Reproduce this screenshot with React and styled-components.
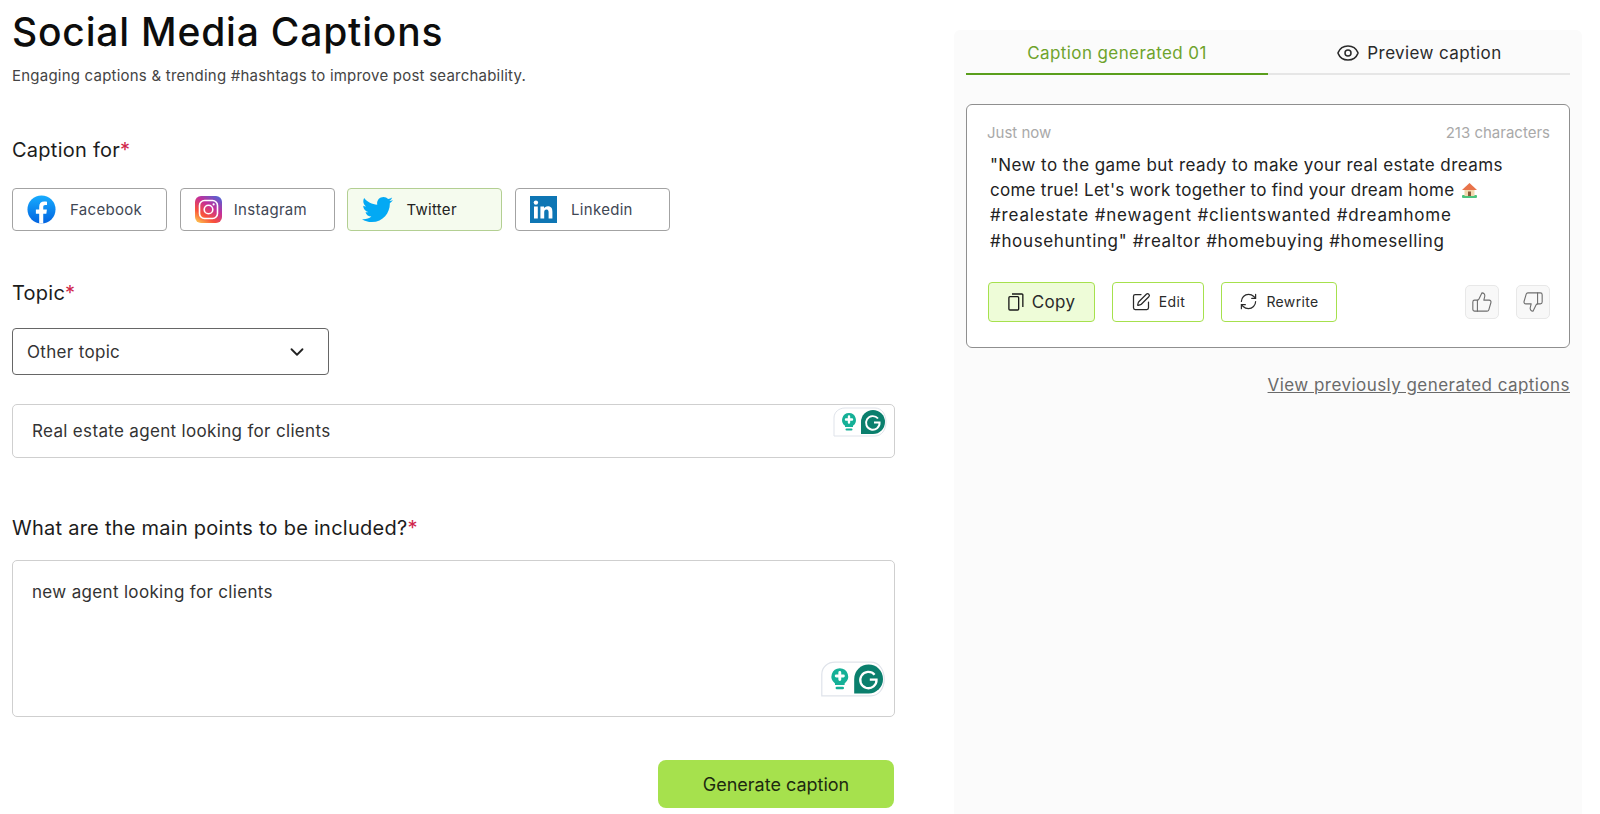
import React from 'react';
import styled, { createGlobalStyle } from 'styled-components';
import { FaTwitter } from 'react-icons/fa';
import { Eye, ChevronDown, SquarePen, RefreshCw, ThumbsUp, ThumbsDown } from 'lucide-react';

const GlobalStyle = createGlobalStyle`
  html, body { margin: 0; padding: 0; background: #fff; }
  body { font-family: Inter, "Open Sans", sans-serif; color: #1a1a1a; overflow: hidden; }
`;

const FacebookIcon = () => (
  <svg width="29" height="29" viewBox="0 0 30 30">
    <defs>
      <linearGradient id="fbg" x1="0" y1="0" x2="0" y2="1">
        <stop offset="0" stopColor="#18acfe" />
        <stop offset="1" stopColor="#0163e0" />
      </linearGradient>
    </defs>
    <circle cx="15" cy="15" r="14.5" fill="url(#fbg)" />
    <path d="M12.6 29.4V19.4H9.2v-4.3h3.4v-3c0-3.5 2-5.4 5.2-5.4 1.5 0 2.9.2 2.9.2v3.5h-1.7c-1.700 0-2.200 1-2.200 2.100v2.600h3.800l-.6 4.300h-3.200v10z" fill="#fff" />
  </svg>
);

const InstagramIcon = () => (
  <svg width="27" height="27" viewBox="0 0 27 27">
    <defs>
      <linearGradient id="igg" x1="0.1" y1="1" x2="0.8" y2="0">
        <stop offset="0" stopColor="#fdc74f" />
        <stop offset="0.3" stopColor="#f9523a" />
        <stop offset="0.65" stopColor="#c32f9a" />
        <stop offset="1" stopColor="#5a5fd0" />
      </linearGradient>
    </defs>
    <rect width="27" height="27" rx="6" fill="url(#igg)" />
    <rect x="4.5" y="4.5" width="18" height="18" rx="5" fill="none" stroke="#fff" strokeWidth="1.6" />
    <circle cx="13.5" cy="13.5" r="4.3" fill="none" stroke="#fff" strokeWidth="1.6" />
    <circle cx="18.6" cy="8.4" r="1.1" fill="#fff" />
  </svg>
);

const LinkedinIcon = () => (
  <svg width="27" height="27" viewBox="0 0 27 27">
    <rect width="27" height="27" fill="#0e76b4" />
    <rect x="4" y="10.5" width="3.8" height="12" fill="#fff" />
    <circle cx="5.9" cy="6.6" r="2.2" fill="#fff" />
    <path d="M10.4 10.5h3.6v1.7c.6-1 1.9-2 3.8-2 3.6 0 4.6 2.2 4.6 5.6v6.7h-3.8v-6c0-1.6-.4-3-2-3-1.8 0-2.4 1.3-2.4 3v6h-3.8z" fill="#fff" />
  </svg>
);

const CopyIcon = () => (
  <svg width="16" height="18" viewBox="0 0 18 20" fill="none" stroke="#1a1a1a" strokeWidth="1.5">
    <rect x="1" y="4" width="11" height="15" rx="1.2" />
    <path d="M4.5 1h11.2a1 1 0 0 1 1 1v13.5" />
  </svg>
);

const HouseIcon = () => (
  <svg width="17" height="16" viewBox="0 0 17 16">
    <rect x="1" y="13" width="15" height="3" rx="1" fill="#4cc47e" />
    <rect x="3.5" y="7" width="10" height="7" fill="#f2d9b0" />
    <path d="M8.5 1 1 8h15z" fill="#e8734a" />
    <rect x="7" y="9.5" width="3" height="4.5" fill="#8a5a3a" />
  </svg>
);

const GrammarlyMark = ({ size }) => (
  <svg width={size === 'lg' ? 66 : 54} height={size === 'lg' ? 36 : 30} viewBox="0 0 54 30">
    <path d="M1 29V11C1 5 6 1 12 1h30c6.500 0 11 6 11 14s-4.500 14-11 14z" fill="#fff" stroke="#dfe3ea" strokeWidth="1" />
    <path d="M16 6a7 7 0 0 0-4 12.700V20h8v-1.300A7 7 0 0 0 16 6z" fill="#15b097" />
    <rect x="12.500" y="21.500" width="7" height="2" rx="1" fill="#15b097" />
    <path d="M16 9.500v6M13 12.500h6" stroke="#fff" strokeWidth="2.400" strokeLinecap="round" />
    <path d="M28 27V15a12 12 0 1 1 12 12z" fill="#0a7f6d" />
    <path d="M45 11.500A6.800 6.800 0 1 0 46.600 15.500h-5.600" fill="none" stroke="#fff" strokeWidth="1.900" />
  </svg>
);

const platforms = [
  { name: 'Facebook', icon: <FacebookIcon />, cell: 57 },
  { name: 'Instagram', icon: <InstagramIcon />, cell: 53 },
  { name: 'Twitter', icon: <FaTwitter size={31} color="#03a9f4" />, cell: 58, active: true },
  { name: 'Linkedin', icon: <LinkedinIcon />, cell: 55 },
];

const App = () => (
  <>
    <GlobalStyle />
    <Page>
      <FormColumn>
        <Title>Social Media Captions</Title>
        <Subtitle>Engaging captions &amp; trending #hashtags to improve post searchability.</Subtitle>

        <CaptionLabel>Caption for<Req>*</Req></CaptionLabel>
        <PlatformRow>
          {platforms.map((p) => (
            <PlatformButton key={p.name} $active={p.active}>
              <PlatformIcon $cell={p.cell}>{p.icon}</PlatformIcon>
              <span>{p.name}</span>
            </PlatformButton>
          ))}
        </PlatformRow>

        <TopicLabel>Topic<Req>*</Req></TopicLabel>
        <Select>
          <span>Other topic</span>
          <ChevronDown size={22} strokeWidth={2} color="#222" />
        </Select>
        <TopicInput>
          Real estate agent looking for clients
          <GrammarlyWidget $size="sm"><GrammarlyMark size="sm" /></GrammarlyWidget>
        </TopicInput>

        <PointsLabel>What are the main points to be included?<Req>*</Req></PointsLabel>
        <PointsArea>
          new agent looking for clients
          <GrammarlyWidget $size="lg"><GrammarlyMark size="lg" /></GrammarlyWidget>
        </PointsArea>

        <SubmitRow>
          <GenerateButton>Generate caption</GenerateButton>
        </SubmitRow>
      </FormColumn>

      <ResultPanel>
        <Tabs>
          <Tab $active>Caption generated 01</Tab>
          <Tab><Eye size={24} strokeWidth={1.5} />Preview caption</Tab>
        </Tabs>
        <ResultCard>
          <MetaRow>
            <span>Just now</span>
            <span>213 characters</span>
          </MetaRow>
          <CaptionText>
            <CaptionLine $track={0.42}>"New to the game but ready to make your real estate dreams</CaptionLine>
            <CaptionLine $track={0.27}>come true! Let's work together to find your dream home <HouseIcon /></CaptionLine>
            <CaptionLine $track={0.82}>#realestate #newagent #clientswanted #dreamhome</CaptionLine>
            <CaptionLine $track={0.65}>#househunting" #realtor #homebuying #homeselling</CaptionLine>
          </CaptionText>
          <ActionRow>
            <ActionButton $primary $w={107}><CopyIcon />Copy</ActionButton>
            <ActionButton $w={92} $small><SquarePen size={20} strokeWidth={1.5} />Edit</ActionButton>
            <ActionButton $w={116} $small><RefreshCw size={19} strokeWidth={1.5} />Rewrite</ActionButton>
            <Votes>
              <VoteButton><ThumbsUp size={22} strokeWidth={1.2} /></VoteButton>
              <VoteButton><ThumbsDown size={22} strokeWidth={1.2} /></VoteButton>
            </Votes>
          </ActionRow>
        </ResultCard>
        <HistoryLink>View previously generated captions</HistoryLink>
      </ResultPanel>
    </Page>
  </>
);

const Page = styled.div`
  width: 1600px;
  height: 814px;
  display: flex;
  overflow: hidden;
  background: #fff;
`;

const FormColumn = styled.div`
  width: 883px;
  margin-left: 12px;
  display: flex;
  flex-direction: column;
`;

const Title = styled.h1`
  margin: 9px 0 0;
  font-size: 39px;
  line-height: 46px;
  font-weight: 500;
  letter-spacing: 0.8px;
  color: #0d0d0d;
`;

const Subtitle = styled.p`
  margin: 11px 0 0;
  font-size: 15px;
  line-height: 20px;
  letter-spacing: 0.22px;
  color: #444;
`;

const Label = styled.div`
  font-size: 20px;
  line-height: 26px;
  letter-spacing: 0.25px;
  color: #1c1c1c;
`;

const CaptionLabel = styled(Label)`
  margin-top: 51px;
`;

const TopicLabel = styled(Label)`
  margin-top: 49px;
`;

const PointsLabel = styled(Label)`
  margin-top: 57px;
`;

const Req = styled.span`
  color: #d0254a;
`;

const PlatformRow = styled.div`
  display: flex;
  gap: 12.7px;
  margin-top: 25px;
`;

const PlatformButton = styled.div`
  box-sizing: border-box;
  width: 155px;
  height: 43px;
  padding-bottom: 1px;
  display: flex;
  align-items: center;
  border-radius: 4px;
  border: 1.5px solid ${({ $active }) => ($active ? '#b3cf92' : '#a3a3a3')};
  background: ${({ $active }) => ($active ? '#f5fbee' : '#fff')};
  font-size: 15px;
  letter-spacing: 0.3px;
  color: ${({ $active }) => ($active ? '#222' : '#3f4754')};
`;

const PlatformIcon = styled.span`
  width: ${({ $cell }) => $cell}px;
  padding-left: 14px;
  box-sizing: border-box;
  display: flex;
  flex: none;
`;

const Select = styled.div`
  box-sizing: border-box;
  width: 317px;
  height: 47px;
  margin-top: 22px;
  padding: 0 20px 0 14px;
  display: flex;
  align-items: center;
  justify-content: space-between;
  border: 1px solid #666;
  border-radius: 4px;
  font-size: 17px;
  letter-spacing: 0.33px;
  color: #333;
`;

const TopicInput = styled.div`
  position: relative;
  box-sizing: border-box;
  height: 54px;
  margin-top: 29px;
  padding: 0 19px;
  display: flex;
  align-items: center;
  border: 1px solid #cfcfcf;
  border-radius: 5px;
  font-size: 17px;
  letter-spacing: 0.33px;
  color: #333;
`;

const PointsArea = styled.div`
  position: relative;
  box-sizing: border-box;
  height: 157px;
  margin-top: 19px;
  padding: 20px 19px;
  border: 1px solid #cfcfcf;
  border-radius: 5px;
  font-size: 17px;
  line-height: 22px;
  letter-spacing: 0.33px;
  color: #333;
`;

const GrammarlyWidget = styled.div`
  position: absolute;
  right: ${({ $size }) => ($size === 'lg' ? '8px' : '7px')};
  top: ${({ $size }) => ($size === 'lg' ? '100px' : '2px')};
  line-height: 0;
`;

const SubmitRow = styled.div`
  display: flex;
  justify-content: flex-end;
  margin-top: 43px;
  padding-right: 1px;
`;

const GenerateButton = styled.div`
  width: 236px;
  height: 48px;
  display: flex;
  align-items: center;
  justify-content: center;
  background: #a6e14d;
  border-radius: 8px;
  font-size: 18px;
  color: #1d2a10;
`;

const ResultPanel = styled.div`
  box-sizing: border-box;
  width: 628px;
  height: 784px;
  margin: 30px 0 0 59px;
  padding: 0 12px;
  background: #fbfbfb;
  border-radius: 6px 6px 0 0;
`;

const Tabs = styled.div`
  display: flex;
  height: 45px;
`;

const Tab = styled.div`
  box-sizing: border-box;
  width: 50%;
  padding-top: 3px;
  display: flex;
  align-items: center;
  justify-content: center;
  gap: 7px;
  font-size: 17px;
  letter-spacing: 0.4px;
  color: ${({ $active }) => ($active ? '#6ea32c' : '#2a2a2a')};
  border-bottom: ${({ $active }) => ($active ? '2px solid #5a9e1c' : '2px solid #e6e6e6')};
`;

const ResultCard = styled.div`
  box-sizing: border-box;
  height: 244px;
  margin-top: 29px;
  padding: 19px 19px 0 20px;
  background: #fff;
  border: 1px solid #8f8f8f;
  border-radius: 6px;
`;

const MetaRow = styled.div`
  display: flex;
  justify-content: space-between;
  font-size: 15px;
  line-height: 18px;
  color: #a9a9a9;
`;

const CaptionText = styled.div`
  margin-top: 11px;
  padding-left: 3px;
  font-size: 17px;
  line-height: 25.2px;
  color: #222;
  svg { vertical-align: -2px; margin-left: 2px; }
`;

const CaptionLine = styled.div`
  letter-spacing: ${({ $track }) => $track}px;
  white-space: nowrap;
`;

const ActionRow = styled.div`
  display: flex;
  align-items: center;
  gap: 17px;
  margin-top: 28px;
  padding-left: 1px;
`;

const ActionButton = styled.div`
  box-sizing: border-box;
  width: ${({ $w }) => $w}px;
  height: 40px;
  display: flex;
  align-items: center;
  justify-content: center;
  gap: 8px;
  border: 1px solid #a6e14d;
  border-radius: 4px;
  background: ${({ $primary }) => ($primary ? '#eefcd8' : '#fff')};
  font-size: ${({ $small }) => ($small ? '14px' : '17px')};
  letter-spacing: 0.35px;
  color: #2a2a2a;
`;

const Votes = styled.div`
  display: flex;
  gap: 17px;
  margin-left: auto;
`;

const VoteButton = styled.div`
  box-sizing: border-box;
  width: 34px;
  height: 34px;
  display: flex;
  align-items: center;
  justify-content: center;
  border: 1px solid #e8e8e8;
  border-radius: 5px;
  background: #f8f8f8;
  color: #6e6e6e;
`;

const HistoryLink = styled.div`
  margin-top: 25px;
  text-align: right;
  font-size: 17px;
  line-height: 24px;
  letter-spacing: 0.45px;
  color: #6a6a6a;
  text-decoration: underline;
`;

export default App;
